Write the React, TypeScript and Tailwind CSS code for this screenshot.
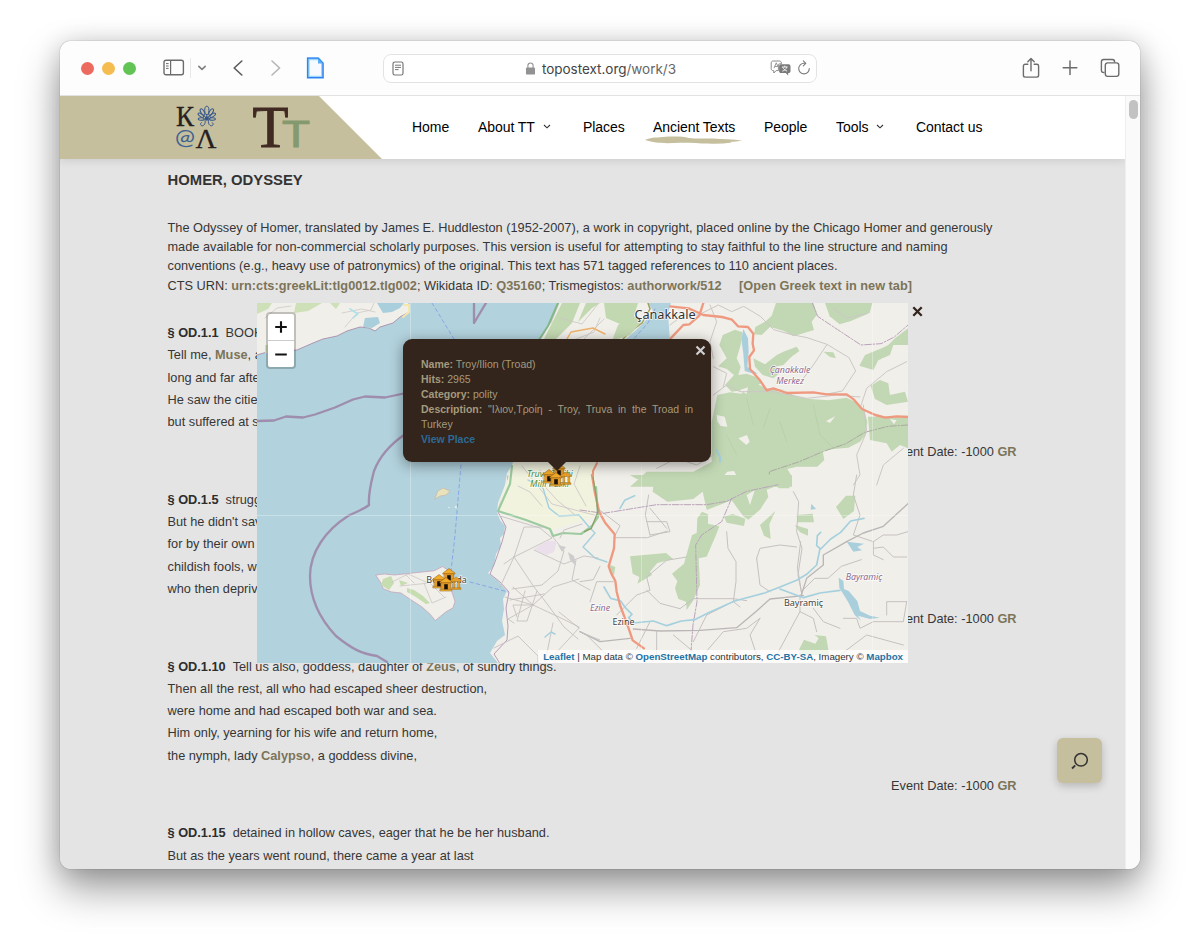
import React from "react";

const ARIAL = "font-['Liberation_Sans',Arial,sans-serif]";

function Toolbar() {
  return (
    <div className="flex h-[55px] shrink-0 items-center border-b border-[#e2e2e2] bg-[#fdfdfd] text-[#666]">
      <div className="ml-[21px] flex gap-2">
        <i className="size-[13px] rounded-full bg-[#ed6a5e]" />
        <i className="size-[13px] rounded-full bg-[#f5bd4f]" />
        <i className="size-[13px] rounded-full bg-[#61c454]" />
      </div>
      <svg className="ml-[27px] h-[18px] w-[22px]" viewBox="0 0 22 18" fill="none" stroke="#6c6c6c" strokeWidth="1.4">
        <rect x="1" y="1.2" width="19.4" height="14.6" rx="2" />
        <path d="M7.6 1v15" strokeWidth="1.2" />
        <path d="M3 4.6h2.6M3 7h2.6M3 9.4h2.6" strokeWidth="1" />
      </svg>
      <i className="ml-[5px] h-5 w-px bg-[#e8e8e8]" />
      <svg className="ml-[5px] h-3 w-3" viewBox="0 0 12 12" fill="none" stroke="#808080" strokeWidth="1.6" strokeLinecap="round" strokeLinejoin="round">
        <path d="M2.800 4.400 6 7.400l3.200-3" />
      </svg>
      <svg className="ml-[23px] h-[18px] w-[14px]" viewBox="0 0 14 18" fill="none" stroke="#5c5c5c" strokeWidth="1.6" strokeLinecap="round" strokeLinejoin="round">
        <path d="M10.8 2 3.2 9l7.6 7" />
      </svg>
      <svg className="ml-[24px] h-[18px] w-[14px]" viewBox="0 0 14 18" fill="none" stroke="#b5b5b5" strokeWidth="1.6" strokeLinecap="round" strokeLinejoin="round">
        <path d="M3 2l7.6 7L3 16" />
      </svg>
      <svg className="ml-[23px] mr-[-1px] h-[22px] w-[20px]" viewBox="0 0 20 22">
        <path d="M2.2 1.7h10.2l4.100 4.500v14H2.2z" fill="#f7fbff" stroke="#9bd7fb" strokeWidth="3" />
        <path d="M1.7 1.2h10.4l4.900 5.2v14.3H1.7z" fill="none" stroke="#2f7df0" strokeWidth="1.3" />
        <path d="M12 1.4v5h4.800z" fill="#5aaef5" />
      </svg>
      <div className="ml-[58px] flex h-[29px] w-[434px] items-center rounded-[8px] border border-[#e3e3e3] bg-white">
        <svg className="ml-[8px] h-[15px] w-[12px]" viewBox="0 0 12 15" fill="none" stroke="#777" strokeWidth="1">
          <rect x="1" y="1" width="10" height="13" rx="1.8" strokeWidth="1.2" />
          <path d="M3 4.2h6M3 6.4h6M3 8.6h3.6" />
        </svg>
        <svg className="ml-[121px] h-[13px] w-[11px]" viewBox="0 0 11 13">
          <rect x="1" y="5.4" width="9" height="7.2" rx="1.2" fill="#929292" />
          <path d="M2.9 6V3.6a2.6 2.6 0 0 1 5.2 0V6" fill="none" stroke="#929292" strokeWidth="1.1" />
        </svg>
        <span className="ml-[6px] w-[134px] whitespace-nowrap pt-[2px] font-['Inter',sans-serif] text-[13.5px] leading-[20px] tracking-[-0.03px] text-[#444]">
          topostext.org<span className="text-[#666]">/work/3</span>
        </span>
        <svg className="ml-[94px] h-[16px] w-[22px]" viewBox="0 0 22 16">
          <path d="M3.2 1h6.2c1.2 0 2 .8 2 2v.8H9.8c-.9 0-1.4.6-1.4 1.4v5.4H6.2L3.8 13v-2.4h-.6c-1.2 0-2-.8-2-2V3c0-1.200.8-2 2-2z" fill="none" stroke="#8a8a8a" strokeWidth="1" />
          <path d="M4 8.200 6.300 2.800l1.500 3.600M4.800 6.500h3" fill="none" stroke="#8a8a8a" strokeWidth=".9" />
          <path d="M11 4.300h7.600c1.100 0 1.900.8 1.900 1.900v5c0 1.100-.8 1.900-1.900 1.900h-.4v2.300l-2.500-2.300H11c-1.100 0-1.900-.8-1.900-1.900v-5c0-1.100.8-1.900 1.900-1.900z" fill="#7a7a7a" />
          <path d="M12 7h5.600M14.800 5.700V7M16.800 7.200c-.7 1.900-2.300 3.200-4.500 4M12.800 7.400c.8 1.700 2.300 3 4.400 3.700" fill="none" stroke="#fff" strokeWidth=".9" />
        </svg>
        <svg className="ml-[5px] h-[16px] w-[14px]" viewBox="0 0 14 16" fill="none" stroke="#7b7b7b" strokeWidth="1.1" strokeLinecap="round" strokeLinejoin="round">
          <path d="M12.300 8.600A5.300 5.300 0 1 1 7 3.300h1.300" />
          <path d="M6.300.9l2.500 2.400-2.500 2.500" />
        </svg>
      </div>
      <svg className="ml-[205px] h-[22px] w-[18px]" viewBox="0 0 18 22" fill="none" stroke="#6c6c6c" strokeWidth="1.4" strokeLinecap="round" strokeLinejoin="round">
        <path d="M5.800 7.300H3.200c-1 0-1.800.7-1.800 1.700v9.300c0 1 .8 1.800 1.800 1.800h11.600c1 0 1.800-.8 1.800-1.800V9c0-1-.8-1.700-1.800-1.700h-2.600" />
        <path d="M9 13.800V1.800M5.800 4.700 9 1.500l3.200 3.200" />
      </svg>
      <svg className="ml-[22px] h-4 w-4" viewBox="0 0 16 16" stroke="#6c6c6c" strokeWidth="1.5" strokeLinecap="round">
        <path d="M8 1v13.500M1.200 7.700h13.600" />
      </svg>
      <svg className="ml-[22px] h-5 w-5" viewBox="0 0 20 20" fill="none" stroke="#6c6c6c" strokeWidth="1.400">
        <path d="M4.500 14.500H3.600c-1.300 0-2.200-.9-2.200-2.200V3.700c0-1.300.9-2.200 2.200-2.200h8.800c1.300 0 2.200.9 2.200 2.200v.8" />
        <rect x="5.300" y="4.900" width="13.500" height="13.500" rx="2.300" />
      </svg>
    </div>
  );
}

function Logos() {
  return (
    <svg className="h-[63px] w-[321px]" viewBox="60 96 321 63">
      <g fontFamily="'Liberation Serif',serif" fill="#26211f" stroke="#26211f" strokeWidth=".3">
        <text x="176" y="126" fontSize="28.500" textLength="18" lengthAdjust="spacingAndGlyphs">К</text>
        <text x="195.500" y="148" fontSize="28" textLength="21" lengthAdjust="spacingAndGlyphs">Λ</text>
        <text x="252.500" y="147" fontSize="59" textLength="36" lengthAdjust="spacingAndGlyphs" fill="#402a22" stroke="#402a22" strokeWidth=".9">T</text>
      </g>
      <text x="175" y="144.500" fontSize="21.500" textLength="20" lengthAdjust="spacingAndGlyphs" fontFamily="Lato,sans-serif" fill="#40628f">@</text>
      <text x="282.500" y="146.500" fontSize="36" textLength="27" lengthAdjust="spacingAndGlyphs" fontFamily="'Noto Sans',sans-serif" fill="#84996e" stroke="#84996e" strokeWidth=".8">T</text>
      <g fill="none" stroke="#34568c" strokeWidth="1">
        <ellipse cx="206.800" cy="110.400" rx="2.100" ry="4.200" />
        <ellipse cx="202.500" cy="112" rx="1.700" ry="3.600" transform="rotate(-30 202.500 112)" />
        <ellipse cx="211.100" cy="112" rx="1.700" ry="3.600" transform="rotate(30 211.100 112)" />
        <ellipse cx="200.900" cy="115.200" rx="1.400" ry="3.200" transform="rotate(-58 200.900 115.200)" />
        <ellipse cx="212.700" cy="115.200" rx="1.400" ry="3.200" transform="rotate(58 212.700 115.200)" />
        <ellipse cx="201.200" cy="119" rx="1.300" ry="3" transform="rotate(-92 201.200 119)" />
        <ellipse cx="212.400" cy="119" rx="1.300" ry="3" transform="rotate(92 212.400 119)" />
        <circle cx="206.800" cy="118.500" r="1.700" fill="#34568c" />
        <path d="M204.800 119.500c1.200 3-.4 6.300-2.600 6.300-2 0-2.300-2.800-.4-3.300M208.800 119.500c-1.200 3 .4 6.300 2.600 6.300 2 0 2.300-2.800.4-3.300M206.800 114v4M204 115.500l2 2.500M209.600 115.500l-2 2.500" />
      </g>
    </svg>
  );
}

function Chevron() {
  return (
    <svg className="ml-[8px] h-2 w-2" viewBox="0 0 8 8" fill="none" stroke="#333" strokeWidth="1.100">
      <path d="M1 2 4 4.800l3-2.800" />
    </svg>
  );
}

function SiteHeader() {
  return (
    <header className="relative z-10 flex h-[63px] shrink-0 bg-white shadow-[0_2px_8px_rgba(0,0,0,0.10)]">
      <div className="h-[63px] w-[322px] bg-[#c5bf9e] [clip-path:polygon(0_0,259px_0,322px_100%,0_100%)]">
        <Logos />
      </div>
      <nav className="ml-[30px] grid grid-cols-[66px_105px_70px_111px_72px_80px_80px] content-start items-start whitespace-nowrap pt-[21px] text-[14px] leading-[20px] tracking-[-0.060px] text-black">
        <a>Home</a>
        <a className="flex items-center">About TT<Chevron /></a>
        <a>Places</a>
        <a className="relative">
          Ancient Texts
          <svg className="absolute -left-[8px] top-[19px] h-2 w-[98px]" viewBox="0 0 98 8" fill="#c5bf9e">
            <path d="M0 4C4 1.500 10 1.500 18 .9c10-.8 20-.6 26 1 8 1 16 .2 24 .6 10 .7 20 .9 29 2-4 1-8 1.100-12 1.300l2 .8c-8 1.100-16 1.400-24 1-10-.4-18-1.100-28-.9-10 .6-18 .6-24-.2C7 6.200 4 5 0 4z" />
          </svg>
        </a>
        <a>People</a>
        <a className="flex items-center">Tools<Chevron /></a>
        <a>Contact us</a>
      </nav>
    </header>
  );
}

function Ref({ children }: { children: React.ReactNode }) {
  return <b className="text-[#7c7459]">{children}</b>;
}

function Section({ id, lines }: { id: string; lines: React.ReactNode[] }) {
  return (
    <section className="flex h-[166.750px] shrink-0 flex-col leading-[22.300px]">
      {lines.map((l, i) => (
        <p key={i}>
          {i === 0 && <b className="mr-[7px] text-[#2d2d2d]">§ {id}</b>}
          {l}
        </p>
      ))}
      {lines.length === 5 && (
        <p className="mt-[8px] self-end">
          Event Date: -1000 <Ref>GR</Ref>
        </p>
      )}
    </section>
  );
}

function Shrine({ x, y }: { x: number; y: number }) {
  return (
    <g transform={`translate(${x} ${y})`} stroke="#8a5a12" strokeWidth=".5">
      <path d="M-6-3 0-7.500 6-3v1h-12z" fill="#f3ab2a" />
      <path d="M-4.700-2.200h9.400v7h-9.400z" fill="#e39a28" />
      <path d="M-5.800 4.300h11.600v1.700h-11.600z" fill="#f6b83c" />
      <path d="M-1.800-.8h3.600v5.100h-3.600z" fill="#17110a" stroke="none" />
    </g>
  );
}

function Cluster({ x, y }: { x: number; y: number }) {
  return (
    <g transform={`translate(${x} ${y})`}>
      <Shrine x={3} y={-6} />
      <Shrine x={-7} y={0} />
      <path d="M5-2 10-5l5 3v1.500H5zM7 0h1.800v6H7zM12 0h1.800v6H12zM6 5.800h9v1.700H6z" fill="#e9a02a" stroke="#9a6a1a" strokeWidth=".4" />
      <Shrine x={0} y={3} />
    </g>
  );
}

function MapCanvas() {
  return (
    <svg className="block h-[360px] w-[651px]" viewBox="257 303 651 360" fill="none" strokeLinejoin="round" strokeLinecap="round">
      <rect x="257" y="303" width="651" height="360" fill="#b2d2dd" />

      {/* mainland */}
      <path d="M558 303l-4 11-4 9-6 9-6 10-4 60-10 30-12 33-5 8-2 12-7 18-1 9 3 8 5 6-1 8-4 4 1 8-5 8-2 12-6 7 10 8 9 10-4 8 1 10-2 12 3 14-8 6-7 12 8 10 2 15h408V303z" fill="#f1efe9" />
      <path d="M558 303l-4 11-4 9-6 9-6 10M508 476l-1 10-7 18-2 8 8 15-4 15-7 20-5 12 10 8 9 10-3 16 2 18-1 14-13 14 5 8 4 12" stroke="#b79db9" strokeWidth="1" />
      <path d="M648 303h23l-3 10 2 29h-48l12-10 13-13 6-8z" fill="#b2d2dd" />
      <path d="M648 303l2 6-8 14-12 9-9 9" stroke="#a0a05a" strokeWidth="1.500" />

      {/* gallipoli shore and islands */}
      <path d="M257 303v52l10-3 20-1 10-1 16-7 10-4 14-3 10-5 13-4 9 1 6 3 5-4 13-4 7-6 9-5-1-9z" fill="#f1efe9" />
      <path d="M257 355l10-3 20-1 10-1 16-7 10-4 14-3 10-5 13-4 9 1 6 3 5-4 13-4 7-6 9-5" stroke="#a98cac" strokeWidth=".9" />
      <path d="M377 303l6 10 9-1 8-4 4-5zM365 318l13-1 2 6-8 5-9-1z" fill="#a9cfdd" />
      <path d="M257 303h15l-4 6-11 5zM296 303h26l-14 8-14 2zM330 303h10l-4 6zM265 345h10v8h-10z" fill="#cde0b7" />
      <path d="M345 327l12-14 14-3 3-7M375 312l-13-3-20 4M265 318l12-10 14-2" stroke="#cfc9c4" strokeWidth=".8" />
      <path d="M350 309l8 5-5 4" stroke="#aee0ea" strokeWidth="1.500" />
      <path d="M404 305h5v7l-6 5" stroke="#f7e6a8" strokeWidth="2" />

      <path d="M376 575l8-1 10 1 18-2 20-2 8-4 6 4 3 6 0 14 3 9-2 6-7 4-5 4-5 4-5-6-8-7-11-7-9-6-9-1-8-3-2-5z" fill="#f1efe9" stroke="#c6a8bd" strokeWidth=".8" transform="translate(376 575) scale(1.04 1.06) translate(-376 -575)" />
      <path d="M383 579l8-3 3 7-5 7-8-5zM407 588l7 2 9 6 7 7-4 1-10-7-9-5zM399 580l9 3-7 3z" fill="#c6ddb0" />
      <path d="M392 582l16-8 18 8 14-4M400 586l30-3 14 14M424 583l8 20 14-6M406 575l8 8" stroke="#cbc6c4" strokeWidth=".8" />
      <path d="M438 491l5-3 7 3-4 4-6 1-5 3z" fill="#e9e3bd" stroke="#c9b8a8" strokeWidth=".7" />
      <circle cx="456" cy="507" r="1.300" fill="#e3eef0" />
      <circle cx="449" cy="507.500" r=".8" fill="#e3eef0" />

      {/* maritime boundaries and ferries */}
      <g stroke="#9d86a8" strokeWidth="2.300" opacity=".9">
        <path d="M257 421l17-.5 12-4 17 1 12-3 20-7 18-8 12-3 20 1 28-6" />
        <path d="M474 303v20l12-20M404 435c-16 11-25 23-30 36-3 12-6 22-5 34-6 5-14 7-21 11-22 14-38 36-38 60s10 43 26 60c16 13 26 18 41 20l10 6" />
      </g>
      <path d="M432 303l22 36M461 465l-6 70-4 36M470 582l38 10M630 343l18-20 8-16" stroke="#88a9e4" strokeWidth="1" strokeDasharray="3.500 3" />

      {/* national park */}
      <path d="M513 463l-6 18-9 28 30 11 24 10h0l32-10 12-4V463z" fill="#f2f3df" />
      <path d="M512 466l-2 18-12 27 28 9 24 9 3 7 10-3 18 1 11-8 6-9-2-30" stroke="#9ccba0" strokeWidth="2.200" />
      <path d="M522 466l30 38 46 12M518 486l12 6 12 14M540 470l6 18 12 13 16 13M580 466l-6 18 12 22" stroke="#c9c3c6" strokeWidth=".8" />
      <path d="M528 480l15 8 6 20 10 8 20-1 10 12 6 6-12 14 12 11 12 4" stroke="#a5d0de" strokeWidth="1.400" />

      {/* peninsula */}
      <path d="M562 303l18 0-8 20-16 16h-12l10-20zM578 322l14-14 8-5h-14zM604 303h34l-4 13-14 8-14-6zM618 325l14-10 10 6-12 14-18 6z" fill="#c2d8b0" />
      <path d="M551 323l8-20M600 318l-6 14-20 8M560 318l22 6 16-20M584 339l20-20" stroke="#cbc6c4" strokeWidth=".8" />
      <path d="M558 303l-10 23-9 14" stroke="#83b889" strokeWidth="2" />
      <path d="M567 339l4-7 22-4 12 6" stroke="#efb36f" strokeWidth="1.400" />

      {/* north-east quadrant */}
      <g transform="translate(580 295) scale(.33333)">
        <g fill="#c2d8b4">
          <path d="M588 24L700 24L712 58L695 80L702 105L640 124L612 108L570 96L545 120L522 118L526 96L555 80L575 62Z" />
          <path d="M735 24h142l-8 30-56 24-34 10-30-24z" />
          <path d="M428 120L465 104L487 112L482 150L470 190L482 215L475 240L500 236L535 248L545 265L500 284L455 290L435 270L462 240L440 222L415 214L440 190L418 150Z" />
          <path d="M520 190L555 208L590 180L610 170L650 155L658 168L630 190L610 210L585 215L610 225L580 250L548 240L525 215Z" />
          <path d="M838 212L855 180L905 160L925 150L945 130L984 100L984 150L940 150L930 180L895 196L880 225Z" />
          <path d="M872 272L900 255L925 265L930 300L975 290L984 320L920 330L885 312Z" />
          <path d="M395 380L412 300L450 292L484 296L520 262L560 280L610 284L650 305L690 312L745 316L800 308L825 320L852 342L862 380L856 420L840 440L805 458L760 462L728 468L733 495L712 515L650 515L622 522L636 545L636 575L150 575L200 530L260 530L340 530L395 500Z" />
          <path d="M864 365L984 362V460L960 450L935 470L920 445L870 435Z" />
          <path d="M730 170l30 2 8 18-18-4z" />
        </g>
        <g fill="#f1efe9">
          <path d="M475 430l26-10 8 20-10 10zM738 378l28-14-16 20zM480 285l24-8-4 20zM590 288l24-2 10 14zM410 360l24 5 8 30-20-2 -10-14zM905 190l24-4-8 26zM426 548l16-18 20-2 10 18-20 10z" />
          <path d="M930 372l20 4-8 12zM640 180l10 14-24 4z" />
        </g>
        <path d="M490 102l14 28 2 40-4 46 32 20-20-2-20-6-4-52-6-44z" fill="#aacfdc" />
        <g stroke="#cbc7c6" strokeWidth="3">
          <path d="M355 60l60-30 40 20 36-16 50 30 40 40 50 14 50 10 60 20 66 40 20 40-40 60-50 10M670 250l30-40 40-60M400 190l-10-50 20-60-20-50M270 90l40-30 50 0M400 300l40-30 40 20 100 0 100 20 90-10 70 6M840 340l20-60 60-50 60-30M850 330l10 80-30 70 10 60-20 30M970 460l-60 50-20 60M230 520l60-30 60 20 50-30M760 40l40 30 60-14M400 215l40 20-10 40" />
          <path d="M700 330l20 90 40 40M570 340l-20 60M600 380l20 60M500 310l20 80M440 420l30 60" stroke="#b8d1aa" />
        </g>
        <g stroke="#b9a3bb" strokeWidth="3" strokeDasharray="20 5 5 5">
          <path d="M697 24l16 40 60 40 70 46 60-4 40-20 41-36" />
          <path d="M984 390l-60 4-70 18-56 34-70 24-70 30-90 30 0 40" stroke="#a9aa9f" />
        </g>
        <path d="M270 34l56 6 44 20 56 6 30 8 18 20 30 2 16 20-2 30 4 20-14 20 2 36 30 34 20 30 20-6 40 14 80-2 40 6 60 0 22 16 24 28 40 18 30 8 34-4 34 2M370 24l-12 38-30 26-18 2-38 40" stroke="#ef9a80" strokeWidth="7" />
        <path d="M410 466l10 20 0 14" stroke="#a5d0de" strokeWidth="6" />
      </g>

      {/* south-east quadrant */}
      <g transform="translate(580 475) scale(.33333)">
        <g fill="#c2d8b4">
          <path d="M150 0L636 0L628 40L598 40L588 34L560 44L565 66L540 104L505 134L490 124L455 76L380 105L368 50L340 72L262 80L218 50L222 14L170 12Z" />
          <path d="M352 130L366 110L384 118L384 146L418 154L408 180L380 245L356 250L360 330L340 376L320 405L318 380L295 372L285 340L292 318L276 296L312 266L336 180L350 174Z" />
          <path d="M150 244l108-10 22 18-48 12-22 26 6 10-44 26 6-20-20-10zM432 125l26-8 38 14-4 22-52 -10zM540 150l46-42-18 40 4 44-20-10zM768 96l30-34 28 0-4 46-32 24zM650 120l48-4 4 26-50 0zM644 150l40 12 0 20-24-10zM658 522L672 494L706 506L716 490L704 480L738 484L748 540L658 540Z" />
          <path d="M90 270l16 6-4 24-14-10z" />
        </g>
        <path d="M500 60l24-14-14 44z" fill="#f1efe9" />
        <path d="M776 308l14 10 2 24 14 6 26 30 8 30 30 14 30 6-30 4-36-10 10 16-20-18-20-40-26-42zM800 200l52 6-20 10 14 10-26 4zM694 86l14 16-16 2z" fill="#aacfdc" />
        <g stroke="#c5c1c2" strokeWidth="3">
          <path d="M60 106l60 46-18 36 100 0 60-20M200 140l60 0 10 30-60 10M210 100l50 60M206 60l-10 60 14 60M440 170l4 50 24 40 0 60-8 60 20 16M530 250l10-30 60-10 50 6M530 250l10 80 30 20M640 50l16 30-6 90 16 50-12 80 12 60M664 350l-6-40-6-30 10-80M664 350l40-40 40 0 40-36 60-20M830 0l-10 60 20 60-20 60 60 20 0 40 30 14M880 200l30-20 40 0 34-10M880 220l30-4 30 30 40 0M0 320l40-6 20-40M30 380l20-60 50 0M110 420l60-60 40-14-10-40 60-50 60-10M200 345l40 40 60 16 40-30 120 0 40 6M340 500l40-80 60-30M370 540l60-70 70-10 40-30M530 540l-20-60 30-50M590 540l70-130 0-50M660 410l40 20 10 40M790 430l40 0 10 30 40-20 90 0 10-60 M920 420l0-40 60 0M780 540l80-60 110 30M80 540l-60-60-20-10M170 520l40-80M230 540l0-70M280 480l60 50M700 400l30 40 50 20" />
          <path d="M0 470l60 30 90-10M160 462l80 6 120-2 110-8 60-50 40-36 100-10M664 360l16-50 50-40 0-30 70-40 50-26 60-20 76-70" stroke="#bab6b7" strokeWidth="4" />
        </g>
        <g stroke="#b9a3bb" strokeWidth="3" strokeDasharray="20 5 5 5">
          <path d="M0 105l70 10 160-26 150 0 60-10 60-30 94-20M455 70l-30 70-60 40-18 30 4 170-12 70-6 80" />
        </g>
        <path d="M852 130l-40 8-30 34-30 20-30 30-12-10 2-30 10-10M720 220l-10 50-30 28-30 18-50 20-46 18-90 24-80 36-40 20-40 4-44 14-40-14-60 6-14-16 10-10-20-20-14-20-30-8-20-34M600 342l70 26 50-14 60-8M120 100l14-24 30-14" stroke="#a5d0de" strokeWidth="5" />
        <path d="M36 0L44 50L58 112L76 144L104 178L102 220L86 274L94 296L106 318L110 350L120 390L146 460L158 496L192 520" stroke="#ef9a80" strokeWidth="7" />
        <path d="M38 0l10 60 6 50-20 50-20 10" stroke="#8aa067" strokeWidth="4" />
      </g>
      <path d="M597 463l-4 8 0 5" stroke="#ef9a80" strokeWidth="2" />

      {/* south-west coast roads */}
      <g stroke="#c5c1c2" strokeWidth=".9">
        <path d="M500 516l40 12 12 10-38 19-10 7M514 557l20 30 14 18 16 22 14 12M514 557l-14 30M514 557l10-30 20 0M534 550l30 14 20-8 14 2M552 536l12 15-6 20-16 14-30 4M533 605l-28-8M533 605l-25 14 6 4M533 605l-20-18M533 605l-20 0 4 12M533 605l20-18 26-8M533 605l30 14 16 8M525 591l-8 30 10 0 10-30M510 600l34-6M579 628l-24 26 0 9M579 628l-20-16M494 648l24-12 20 20 0 7M560 538l4-8 18-6M576 560l-4 20 18 10M545 663l8-40M580 632l20 8" />
      </g>
      <path d="M534 549l12-8 10 3-2 8-8 3zM548 541h9l-3 10z" fill="#eadfea" />
      <path d="M558 545l8 2-4 5zM568 552l6 4 2 10-6-6z" fill="#cfcccd" />
      <path d="M545 637l6-5 4 2" stroke="#a5d0de" strokeWidth="1.500" />

      {/* tile seams */}
      <path d="M410.500 303v360M641.500 463v200M872.500 303v360M257 515.500h651" stroke="#fff" strokeWidth=".7" opacity=".45" />

      {/* labels */}
      <g fontFamily="'Noto Sans',sans-serif" textAnchor="middle" stroke="#ffffffcc" strokeWidth="1.500" paintOrder="stroke">
        <text x="665" y="318.500" fontSize="12.700" fill="#333">Çanakkale</text>
        <g fontSize="8.800" fontStyle="italic" fill="#8d6a93">
          <text x="790" y="373">Çanakkale</text>
          <text x="790" y="383.500">Merkez</text>
          <text x="600" y="610.500">Ezine</text>
          <text x="864" y="579.500">Bayramiç</text>
        </g>
        <g fontSize="9" fill="#444">
          <text x="803.500" y="605.500">Bayramiç</text>
          <text x="623.500" y="624.500">Ezine</text>
          <text x="446.500" y="583">Bozcaada</text>
        </g>
        <g fontSize="8.800" fontStyle="italic" fill="#3e8e42">
          <text x="550" y="477">Truva Tarihi</text>
          <text x="549.500" y="487">Milli Parkı</text>
        </g>
      </g>
      <Cluster x={446} y={582} />
      <Cluster x={556} y={477} />
    </svg>
  );
}

function PlacePopup() {
  return (
    <div className="absolute left-[146px] top-[36px] flex w-[308px] flex-col items-center">
      <div className="h-[123px] w-full rounded-[9px] bg-[#33241c] pl-[18px] pr-[18px] pt-[18px] text-[10.500px] leading-[14.900px] text-[#a49b7e] shadow-[0_3px_14px_rgba(0,0,0,0.4)]">
        <svg className="absolute right-[5px] top-[6px] h-[11px] w-[11px]" viewBox="0 0 11 11" stroke="#cfcfcf" strokeWidth="2.200">
          <path d="M1.500 1.500l8 8M9.500 1.500l-8 8" />
        </svg>
        <p><b>Name:</b> Troy/Ilion (Troad)</p>
        <p><b>Hits:</b> 2965</p>
        <p><b>Category:</b> polity</p>
        <p className="text-justify"><b>Description:</b> "Ιλιον,Τροίη - Troy, Truva in the Troad in Turkey</p>
        <p className="font-bold text-[#2c6a94]">View Place</p>
      </div>
      <i className="h-[9px] w-[18px] bg-[#33241c] [clip-path:polygon(0_0,100%_0,50%_100%)]" />
    </div>
  );
}

function MapDialog() {
  return (
    <div className="absolute left-[197px] top-[207px] z-20 h-[360px] w-[651px]">
      <MapCanvas />
      <div className="absolute left-[9px] top-[9px] flex flex-col overflow-hidden rounded-[4px] border-2 border-black/20 bg-white bg-clip-padding">
        {["M7.500 13.500h12M13.500 7.500v12", "M7.500 14h12"].map((d, i) => (
          <button key={i} className="h-[27px] w-[26px] border-b border-[#ccc] last:h-[26px] last:border-b-0">
            <svg className="h-[26px] w-[26px]" viewBox="0 0 27 27" stroke="#111" strokeWidth="2.200">
              <path d={d} />
            </svg>
          </button>
        ))}
      </div>
      <PlacePopup />
      <p className="absolute bottom-0 right-0 whitespace-nowrap bg-white/75 px-[5px] text-[9.720px] leading-[13px] text-[#333] [&_b]:text-[#1c73a6]">
        <b>Leaflet</b> | Map data © <b>OpenStreetMap</b> contributors, <b>CC-BY-SA</b>, Imagery © <b>Mapbox</b>
      </p>
      <svg className="absolute -right-[15px] top-[3px] h-[11px] w-[11px]" viewBox="0 0 11 11" stroke="#33241c" strokeWidth="2.300">
        <path d="M1.300 1.300l8.400 8.400M9.700 1.300l-8.400 8.400" />
      </svg>
    </div>
  );
}

export default function App() {
  return (
    <div className={`flex h-[948px] w-[1200px] overflow-hidden bg-white pl-[60px] pt-[41px] ${ARIAL}`}>
      <div className="flex h-[828px] w-[1080px] flex-col overflow-hidden rounded-[11px] bg-[#fafafa] shadow-[0_0_1px_rgba(0,0,0,0.6),0_20px_40px_rgba(0,0,0,0.38),0_2px_24px_rgba(0,0,0,0.16)]">
        <Toolbar />
        <div className="flex min-h-0 flex-1">
          <div className="relative flex w-[1065px] flex-col overflow-hidden bg-[#e4e4e4]">
            <SiteHeader />
            <MapDialog />
            <main className="ml-[107.500px] flex w-[849px] flex-col whitespace-nowrap pt-[11px] text-[12.760px] text-[#363636]">
              <h1 className="text-[14.850px] font-bold leading-[20px] text-[#333]">HOMER, ODYSSEY</h1>
              <div className="mt-[28px] h-[104px] leading-[19.200px]">
                <p>The Odyssey of Homer, translated by James E. Huddleston (1952-2007), a work in copyright, placed online by the Chicago Homer and generously</p>
                <p>made available for non-commercial scholarly purposes. This version is useful for attempting to stay faithful to the line structure and naming</p>
                <p>conventions (e.g., heavy use of patronymics) of the original. This text has 571 tagged references to 110 ancient places.</p>
                <p>
                  CTS URN: <Ref>urn:cts:greekLit:tlg0012.tlg002</Ref>; Wikidata ID: <Ref>Q35160</Ref>; Trismegistos: <Ref>authorwork/512</Ref>
                  <span className="ml-[17.500px]"><Ref>[Open Greek text in new tab]</Ref></span>
                </p>
              </div>
              <Section id="OD.1.1" lines={["BOOK", <>Tell me, <Ref>Muse</Ref>, about</>, "long and far after", "He saw the cities", "but suffered at sea"]} />
              <Section id="OD.1.5" lines={["struggling", "But he didn't save", "for by their own", "childish fools, who", "who then deprived"]} />
              <Section
                id="OD.1.10"
                lines={[
                  <>Tell us also, goddess, daughter of <Ref>Zeus</Ref>, of sundry things.</>,
                  "Then all the rest, all who had escaped sheer destruction,",
                  "were home and had escaped both war and sea.",
                  "Him only, yearning for his wife and return home,",
                  <>the nymph, lady <Ref>Calypso</Ref>, a goddess divine,</>,
                ]}
              />
              <Section id="OD.1.15" lines={["detained in hollow caves, eager that he be her husband.", "But as the years went round, there came a year at last"]} />
            </main>
            <button className="absolute bottom-[86px] right-[23px] z-20 flex size-[45px] items-center justify-center rounded-[6px] bg-[#c5bf9e] shadow-[0_3px_8px_rgba(0,0,0,0.2)]">
              <svg className="size-[18px]" viewBox="0 0 18 18" fill="none" stroke="#333" strokeWidth="1.500">
                <circle cx="10" cy="7.800" r="6.300" />
                <path d="M4.200 13.300 1 16.500" strokeWidth="1.800" />
              </svg>
            </button>
          </div>
          <div className="w-[15px] border-l border-[#eee] bg-[#fafafa] pl-[3px] pt-[4px]">
            <i className="block h-[19px] w-[9px] rounded-full bg-[#c2c2c2]" />
          </div>
        </div>
      </div>
    </div>
  );
}
